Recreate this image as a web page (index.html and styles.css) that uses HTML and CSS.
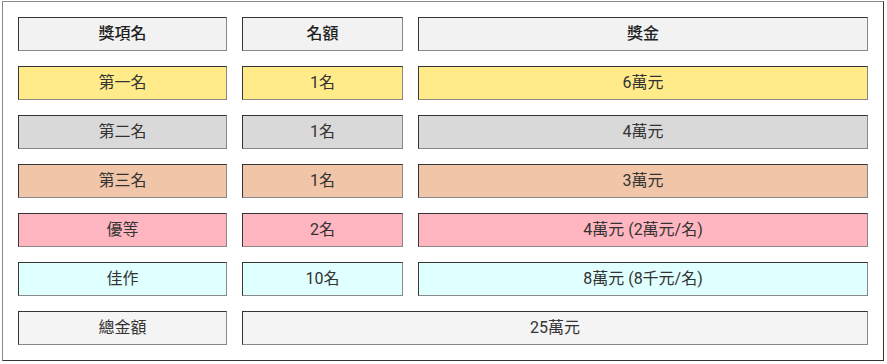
FILE: index.html
```html
<!DOCTYPE html>
<html lang="zh-Hant">

<head>
    <meta charset="UTF-8">
    <meta name="viewport" content="width=device-width, initial-scale=1.0">

    <link rel="stylesheet" href="styles.css">

    <title>獎金一覽</title>
</head>

<body>
    <table class="prize-table">
        <colgroup>
            <col class="col-name">
            <col class="col-count">
            <col class="col-amount">
        </colgroup>
        <tr class="row-head">
            <th>獎項名</th>
            <th>名額</th>
            <th>獎金</th>
        </tr>
        <tr class="row-gold">
            <td>第一名</td>
            <td>1名</td>
            <td>6萬元</td>
        </tr>
        <tr class="row-silver">
            <td>第二名</td>
            <td>1名</td>
            <td>4萬元</td>
        </tr>
        <tr class="row-bronze">
            <td>第三名</td>
            <td>1名</td>
            <td>3萬元</td>
        </tr>
        <tr class="row-merit">
            <td>優等</td>
            <td>2名</td>
            <td>4萬元 (2萬元/名)</td>
        </tr>
        <tr class="row-honor">
            <td>佳作</td>
            <td>10名</td>
            <td>8萬元 (8千元/名)</td>
        </tr>
        <tr class="row-total">
            <td>總金額</td>
            <td colspan="2">25萬元</td>
        </tr>
    </table>
</body>

</html>
```

FILE: styles.css
```css
*,
*::before,
*::after {
    box-sizing: border-box;
}

body {
    margin: 1px 0 0 2px;
    background: #fff;
    font-family: Roboto, "Noto Sans CJK TC", sans-serif;
    color: #333;
}

.prize-table {
    width: 882px;
    table-layout: fixed;
    border: 1px outset #888;
    border-spacing: 15px;
    font-size: 16px;
}

.col-name {
    width: 209px;
}

.col-count {
    width: 161px;
}

.col-amount {
    width: 450px;
}

th,
td {
    height: 34px;
    padding: 0 4px;
    border: 1px inset #888;
    text-align: center;
    line-height: 18px;
}

th {
    font-weight: 500;
    color: #222;
}

.row-head th {
    background: #f2f2f2;
}

.row-gold td {
    background: #ffeb8a;
}

.row-silver td {
    background: #d9d9d9;
}

.row-bronze td {
    background: #f0c5a8;
}

.row-merit td {
    background: #ffb6c1;
}

.row-honor td {
    background: #e0ffff;
}

.row-total td {
    background: #f4f4f4;
}
```
